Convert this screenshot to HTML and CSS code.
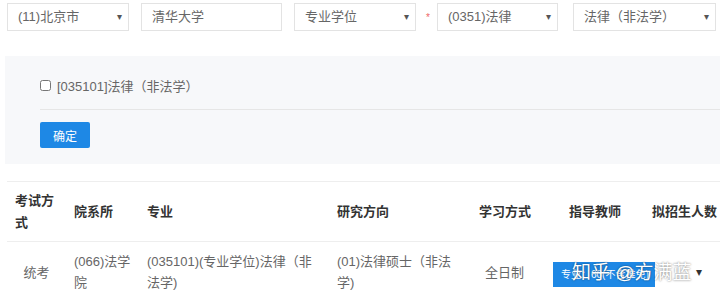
FILE: index.html
```html
<!DOCTYPE html>
<html lang="zh-CN">
<head>
    <meta charset="UTF-8">
    <title>硕士专业目录查询</title>
    <link rel="stylesheet" href="styles.css">
</head>
<body>
    <div class="filter-bar">
        <div class="fake-select w-122">(11)北京市<span class="caret">▾</span></div>
        <div class="fake-input">清华大学</div>
        <div class="fake-select w-122">专业学位<span class="caret">▾</span></div>
        <span class="required">*</span>
        <div class="fake-select w-121">(0351)法律<span class="caret">▾</span></div>
        <div class="fake-select w-143">法律（非法学）<span class="caret">▾</span></div>
    </div>

    <div class="pick-panel">
        <label class="pick-item"><input type="checkbox" class="pick-check">[035101]法律（非法学）</label>
        <div class="pick-line"></div>
        <button class="ok-btn">确定</button>
    </div>

    <table class="result-table">
        <thead>
            <tr>
                <th class="c1">考试方式</th>
                <th class="c2">院系所</th>
                <th class="c3">专业</th>
                <th class="c4">研究方向</th>
                <th class="c5">学习方式</th>
                <th class="c6">指导教师</th>
                <th class="c7">拟招生人数</th>
            </tr>
        </thead>
        <tbody>
            <tr>
                <td class="center">统考</td>
                <td>(066)法学院</td>
                <td>(035101)(专业学位)法律（非法学)</td>
                <td>(01)法律硕士（非法学)</td>
                <td class="mode">全日制</td>
                <td class="tag-cell"><span class="quota-tag">专业：60(不含推免)</span></td>
                <td class="drop-cell"><span class="drop-caret">▾</span></td>
            </tr>
        </tbody>
    </table>

    <div class="watermark">知乎 @方满蓝</div>
</body>
</html>
```

FILE: styles.css
```css
body {
    margin: 0;
    width: 720px;
    overflow: hidden;
    font-family: "Liberation Sans", "Noto Sans CJK SC", sans-serif;
    font-size: 13px;
    color: #666;
    background: #fff;
    position: relative;
}
.filter-bar {
    display: flex;
    align-items: center;
    padding: 3px 0 0 7px;
    white-space: nowrap;
}
.fake-select, .fake-input {
    box-sizing: border-box;
    height: 28px;
    line-height: 26px;
    padding: 0 10px;
    border: 1px solid #e3e3e3;
    color: #666;
    font-size: 13px;
    position: relative;
    flex-shrink: 0;
    margin-right: 12px;
}
.fake-input {
    width: 141px;
}
.w-122 { width: 122px; }
.w-121 { width: 121px; margin-right: 15px; }
.w-143 { width: 143px; margin-right: 0; }
.caret {
    position: absolute;
    right: 6px;
    top: 0;
    font-size: 10px;
    color: #555;
}
.required {
    flex-shrink: 0;
    box-sizing: border-box;
    width: 21px;
    margin-left: -12px;
    padding-left: 10px;
    color: #e66;
    font-size: 10px;
}
.pick-panel {
    margin: 25px 0 0 5px;
    height: 108px;
    box-sizing: border-box;
    padding: 17px 0 0 35px;
    background: #f7f8fa;
}
.pick-item {
    display: flex;
    align-items: center;
    height: 24px;
    color: #666;
}
.pick-check {
    width: 11px;
    height: 11px;
    margin: 0 6px 0 0;
}
.pick-line {
    border-top: 1px solid #e6e6e6;
    margin: 12px 0 12px;
}
.ok-btn {
    width: 50px;
    height: 26px;
    border: none;
    border-radius: 2px;
    background: #1e88e5;
    color: #fff;
    font-family: inherit;
    font-size: 12px;
    padding: 0;
}
.result-table {
    margin: 17px 0 0 7px;
    border-collapse: collapse;
    table-layout: fixed;
    width: 773px;
    border-top: 1px solid #eee;
}
.result-table th {
    height: 59px;
    text-align: left;
    font-weight: bold;
    color: #333;
    padding: 0 8px;
    line-height: 22px;
    border-bottom: 1px solid #eee;
}
.result-table td {
    height: 56px;
    padding: 0 8px;
    line-height: 21px;
    vertical-align: middle;
}
.c1 { width: 43px; }
.c2 { width: 57px; }
.c3 { width: 174px; }
.c4 { width: 126px; }
.c5 { width: 74px; }
.c6 { width: 67px; }
.c7 { width: 120px; }
.center {
    text-align: center;
}
.mode {
    padding-left: 14px !important;
}
.tag-cell {
    white-space: nowrap;
    padding-top: 4px !important;
}
.quota-tag {
    display: inline-block;
    margin-left: -16px;
    width: 102px;
    height: 25px;
    line-height: 25px;
    background: #1e88e5;
    color: #fff;
    font-size: 10px;
    padding-left: 8px;
    box-sizing: border-box;
}
.drop-caret {
    margin-left: 44px;
    color: #333;
    font-size: 12px;
}
.watermark {
    position: absolute;
    left: 572px;
    top: 257px;
    font-size: 19px;
    color: #fff;
    white-space: nowrap;
    text-shadow: 0 0 2px rgba(0, 0, 0, 0.6);
}
```
